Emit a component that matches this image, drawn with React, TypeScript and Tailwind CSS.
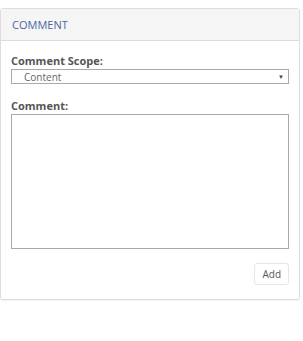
export default function App() {
  return (
    <div className="w-[303px] h-[341px] bg-white pt-[8px]" style={{ fontFamily: '"Open Sans", sans-serif' }}>
      <div className="w-[300px] border border-[#dddddd] rounded-[3px] shadow-[0_1px_1px_rgba(0,0,0,0.05)] bg-white">
        {/* header */}
        <div className="h-[32px] bg-[#f5f5f5] border-b border-[#dddddd] px-[11px] flex items-center">
          <span className="text-[11px] text-[#4a67a3] leading-none">COMMENT</span>
        </div>
        {/* body */}
        <div className="px-[10px] pt-[12px] pb-[14px]">
          <label className="block text-[11px] font-bold text-[#555555] leading-[15px]">Comment Scope:</label>
          <div className="mt-[1px] h-[15px] border border-[#a9a9a9] flex items-center justify-between pl-[12px] pr-[4px]">
            <span className="text-[10px] text-[#666666] leading-none">Content</span>
            <span className="text-[6px] text-[#444444] leading-none">▼</span>
          </div>
          <label className="block mt-[14px] text-[11px] font-bold text-[#555555] leading-[15px]">Comment:</label>
          <textarea className="block mt-[1px] w-full h-[135px] border border-[#a9a9a9] resize-none outline-none" />
          <div className="flex justify-end mt-[14px]">
            <button className="h-[22px] px-[7px] border border-[#e6e6e6] rounded-[3px] bg-white text-[10px] text-[#555555]">
              Add
            </button>
          </div>
        </div>
      </div>
    </div>
  );
}
